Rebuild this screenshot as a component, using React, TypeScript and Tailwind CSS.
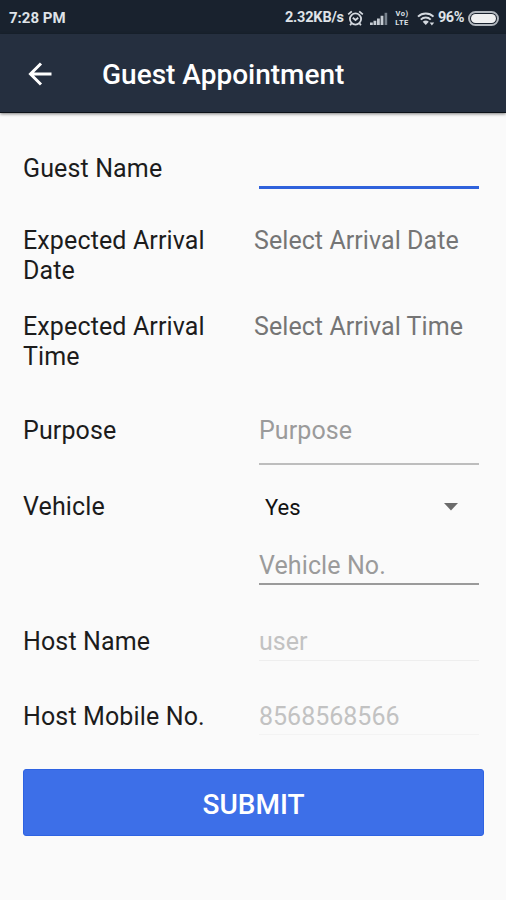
import * as React from 'react';

function Row({ label, className, children }: { label: string; className: string; children?: React.ReactNode }) {
  return (
    <div className={`flex items-start ${className}`}>
      <div className="w-[231px] shrink-0 pr-8 tracking-[0.13px] text-[#1c1c1c]">{label}</div>
      <div className="flex w-[225px] flex-col">{children}</div>
    </div>
  );
}

function Field({ text, className }: { text?: string; className: string }) {
  return <div className={`ml-[5px] w-[220px] ${className}`}>{text}</div>;
}

function AlarmIcon() {
  return (
    <svg width="17" height="17" viewBox="0 0 17 17" fill="none" stroke="#d5dae0" strokeWidth="1.8">
      <circle cx="8.5" cy="9" r="5.6" />
      <path d="M5.8 7.8l2.7 2.2 2.7-2.2M1.2 4.4L4.8 1.4M15.8 4.4l-3.6-3M4.6 13.2l-1.5 2M12.4 13.2l1.5 2" />
    </svg>
  );
}

function SignalIcon() {
  return (
    <svg width="18" height="13" viewBox="0 0 18 13" fill="#c6ccd3">
      <path d="M0 10.5h2.8V13H0zM3.5 8.8h2.8V13H3.5zM7 6.5h2.8V13H7zM10.6 3.8h2.8V13h-2.8z" />
      <path d="M14.6 0.8h2.6V13h-2.6z" fill="#77818c" />
    </svg>
  );
}

function WifiIcon() {
  return (
    <svg width="18" height="15" viewBox="0 0 18 15" fill="none" stroke="#d5dae0" strokeWidth="2">
      <path d="M1 5.6c4.3-4.2 11.2-4.2 15.5 0M3.8 8.6c2.8-2.7 7.1-2.7 9.9 0" />
      <path d="M5.7 10.8c1.8-1.6 4.3-1.6 6.1 0l-3.05 3.2z" fill="#d5dae0" stroke="none" />
      <path d="M12.6 11.4h4.6l-2.3 3z" fill="#d5dae0" stroke="none" />
    </svg>
  );
}

function StatusBar() {
  return (
    <div className="flex h-[34px] items-center bg-[#19222e] pt-[2px] pl-[9px] text-[15px] font-bold text-[#dfe3e8]">
      <span className="w-[276px]">7:28 PM</span>
      <span className="w-[62px] text-[14.5px] tracking-[-0.2px] whitespace-nowrap">2.32KB/s</span>
      <AlarmIcon />
      <span className="ml-[6px]"><SignalIcon /></span>
      <span className="ml-[5px] flex w-[18px] flex-col text-center text-[7.5px] leading-[9px] tracking-[0.5px]">
        <span>Vo)</span>
        <span>LTE</span>
      </span>
      <span className="ml-[6px]"><WifiIcon /></span>
      <span className="ml-[3px] w-[30px] text-[14.5px] tracking-[-0.5px]">96%</span>
      <span className="flex h-[15px] w-[31px] rounded-full border-2 border-[#b0b6bd] p-px">
        <span className="flex-1 rounded-full bg-[#eff0f1]" />
      </span>
    </div>
  );
}

export default function App() {
  return (
    <main className="h-[900px] w-[506px] overflow-hidden bg-[#fafafa] font-['Roboto',sans-serif]">
      <StatusBar />
      <header className="flex h-[79px] items-center border-b border-[#0c1118] bg-[#252f3f] pt-[4px] pl-[28px] shadow-[0_1px_3px_rgba(0,0,0,0.5)]">
        <svg className="mb-[2px]" width="24" height="24" viewBox="0 0 24 24" fill="none" stroke="#fff" strokeWidth="3">
          <path d="M23.5 12H2.5M13 1.5L2.5 12 13 22.5" />
        </svg>
        <h1 className="ml-[50px] text-[28px] leading-[34px] font-medium text-white">Guest Appointment</h1>
      </header>
      <form className="px-[23px] pt-[41px] text-[25px] leading-[29.5px]">
        <Row label="Guest Name" className="h-[72px]">
          <Field className="h-[35px] border-b-[3px] border-[#2f62dc]" />
        </Row>
        <Row label="Expected Arrival Date" className="h-[86px]">
          <span className="tracking-[0.07px] text-[#757575]">Select Arrival Date</span>
        </Row>
        <Row label="Expected Arrival Time" className="h-[104px]">
          <span className="tracking-[0.07px] text-[#757575]">Select Arrival Time</span>
        </Row>
        <Row label="Purpose" className="h-[76px]">
          <Field text="Purpose" className="h-[49px] border-b-2 border-[#bdbdbd] tracking-[0.1px] text-[#9b9b9b]" />
        </Row>
        <Row label="Vehicle" className="h-[134.5px]">
          <div className="flex h-[59px] items-start pl-[11px] text-[22px] text-[#111]">
            <span className="w-[179px] pt-px">Yes</span>
            <svg className="mt-[11px]" width="14" height="8" viewBox="0 0 14 8" fill="#6b6b6b">
              <path d="M0 0h14L7 7.5z" />
            </svg>
          </div>
          <Field text="Vehicle No." className="h-[34px] border-b-2 border-[#9a9a9a] tracking-[0.1px] text-[#9b9b9b]" />
        </Row>
        <Row label="Host Name" className="h-[75px]">
          <Field text="user" className="h-[34px] border-b border-[#eeeeee] text-[#c2c2c2]" />
        </Row>
        <Row label="Host Mobile No." className="h-[67.5px]">
          <Field text="8568568566" className="h-[33px] border-b border-[#f3f3f3] text-[#c2c2c2]" />
        </Row>
        <button
          type="button"
          className="flex h-[67px] w-[461px] items-center justify-center rounded-[3px] border border-[#2e63e2] bg-[#3d6fe8] pt-[4px] text-[28px] font-medium text-white"
        >
          SUBMIT
        </button>
      </form>
    </main>
  );
}
